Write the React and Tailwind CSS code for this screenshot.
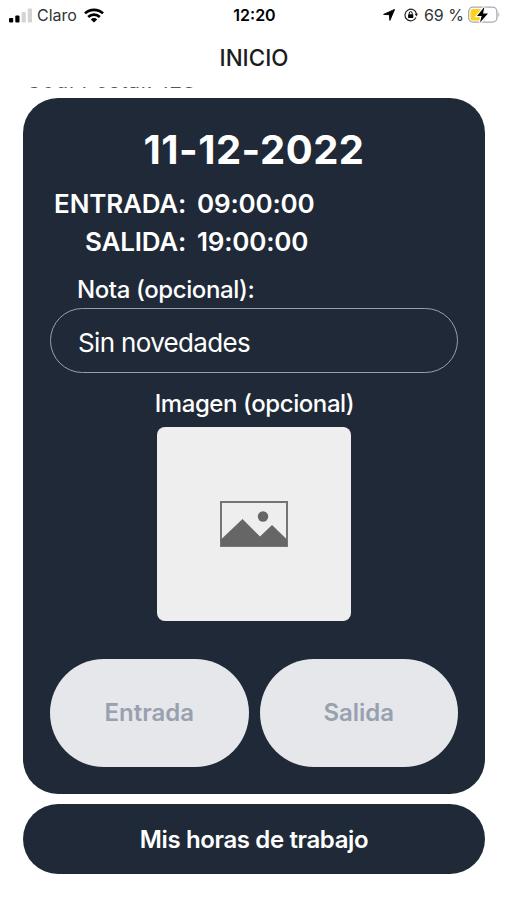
import React from 'react';

const SignalIcon = () => (
  <svg width="23" height="15" viewBox="0 0 23 15">
    <rect x="0" y="10" width="4.2" height="4.5" rx="1" fill="#000" />
    <rect x="6.3" y="7.5" width="4.2" height="7" rx="1" fill="#000" />
    <rect x="12.6" y="4" width="4.2" height="10.5" rx="1" fill="#d4d4d4" />
    <rect x="18.8" y="0.5" width="4.2" height="14" rx="1" fill="#d4d4d4" />
  </svg>
)

const WifiIcon = () => (
  <svg width="20" height="15" viewBox="0 0 20 15" fill="none" stroke="#000" strokeWidth="2.7">
    <path d="M1 5.4a13 13 0 0 1 18 0" />
    <path d="M4.2 9a8.4 8.4 0 0 1 11.6 0" />
    <path d="M10 14.6L6.8 11.4a4.6 4.6 0 0 1 6.4 0z" fill="#000" stroke="none" />
  </svg>
)

const LocationIcon = () => (
  <svg width="12" height="12" viewBox="0 0 12 12">
    <path d="M11.6 0.4L6.9 11.4L6.4 5.7L0.6 5.4z" fill="#000" stroke="#000" strokeWidth="0.9" strokeLinejoin="round" />
  </svg>
)

const RotationLockIcon = () => (
  <svg width="14" height="14" viewBox="0 0 14 14" fill="none">
    <path d="M12 9.6A5.8 5.8 0 1 1 12.5 6" stroke="#222" strokeWidth="1.2" />
    <path d="M10.6 5.8h3.4l-1.6 2.8z" fill="#222" />
    <rect x="4.1" y="6.3" width="5.2" height="3.8" rx="0.6" fill="#000" />
    <path d="M5.2 6.5V5.2a1.5 1.5 0 0 1 3 0v1.3" stroke="#000" />
  </svg>
)

const BatteryIcon = () => (
  <svg width="32" height="18" viewBox="0 0 32 18">
    <rect x="0.7" y="1.2" width="28.2" height="15" rx="4.4" fill="#fff" stroke="#aaa" strokeWidth="1.3" />
    <path d="M5 3h12v11.5H5a2.5 2.5 0 0 1-2.5-2.5V5.5A2.5 2.5 0 0 1 5 3z" fill="#fdd21c" />
    <path d="M30.3 6.3q2 2.4 0 4.8z" fill="#aaa" />
    <path d="M16.5 0.8L9 10h4.6L12 16.6L20 7.5h-5z" fill="#000" stroke="#fff" strokeWidth="2.4" paintOrder="stroke" />
  </svg>
)

const PlaceholderIcon = () => (
  <svg width="68" height="46" viewBox="0 0 68 46">
    <rect x="1" y="1" width="66" height="44" fill="none" stroke="#757575" strokeWidth="2" />
    <path d="M1 38.5L22.5 18L40 35.5L52 24L67 38.5V45H1z" fill="#666" />
    <circle cx="43" cy="15.5" r="5.2" fill="#666" />
  </svg>
)

const App = () => {

  const [note, setNote] = React.useState('Sin novedades')

  return (
    <div className="h-[900px] w-[507px] overflow-hidden bg-white font-['Inter',sans-serif] text-black">
      {/* Status bar */}
      <div className="grid h-[30px] grid-cols-3 items-center pl-[9px] pr-[7px] text-[16px]">
        <div className="flex items-center">
          <SignalIcon />
          <span className="ml-[5px] mr-[7px] text-[#333]">Claro</span>
          <WifiIcon />
        </div>
        <div className="text-center font-semibold">12:20</div>
        <div className="flex items-center justify-end">
          <LocationIcon />
          <span className="ml-[9px] mr-[6px]"><RotationLockIcon /></span>
          <span className="mr-[4px] whitespace-nowrap text-[#333]">69 %</span>
          <BatteryIcon />
        </div>
      </div>

      {/* Header */}
      <div className="flex h-[57px] items-center justify-center">
        <h1 className="-mt-px pl-px text-[22.4px] font-medium text-[#1c1c1e]">INICIO</h1>
      </div>

      {/* Contenido con scroll */}
      <div className="pl-[23px] pr-[22px]">
        <div className="flex h-[11px] items-start overflow-hidden pl-[3px]">
          <p className="-mt-[19.5px] whitespace-nowrap text-[21px] leading-[26px] tracking-[0.72px] text-[#555]">Codi Postal: 123</p>
        </div>

        <div className="flex h-[695.5px] flex-col rounded-[35px] bg-[#1f2937] px-[27px] text-white">
          <h2 className="mt-[27px] text-center text-[40px] font-bold leading-[50px] tracking-[0.5px] [font-feature-settings:'calt'_0]">11-12-2022</h2>

          <div className="mt-[10px] grid grid-cols-[136px_1fr] gap-x-[11px] text-[26px] font-semibold leading-[38px] tracking-[-0.2px]">
            <span className="text-right">ENTRADA:</span>
            <span>09:00:00</span>
            <span className="text-right">SALIDA:</span>
            <span>19:00:00</span>
          </div>

          <label className="ml-[27px] mt-[14px] text-[24px] font-medium leading-[30px] tracking-[-0.4px]">Nota (opcional):</label>
          <input
            type="text"
            value={note}
            onChange={(e) => setNote(e.target.value)}
            className="mt-[3px] h-[65px] w-full rounded-full border border-[#9aa0aa] bg-transparent px-[27px] pt-[3px] text-[26px] tracking-[-0.66px] outline-none"
          />

          <p className="mt-[16px] pl-px text-center text-[24px] font-medium leading-[30px] tracking-[-0.42px]">Imagen (opcional)</p>
          <div className="mx-auto mt-[8px] flex h-[194px] w-[194px] items-center justify-center rounded-[8px] bg-[#eee]">
            <PlaceholderIcon />
          </div>

          <div className="mt-[38px] grid grid-cols-2 gap-[11px]">
            <button className="h-[108px] rounded-full bg-gray-200 text-[24px] font-semibold text-gray-400">Entrada</button>
            <button className="h-[108px] rounded-full bg-gray-200 text-[24px] font-semibold text-gray-400">Salida</button>
          </div>
        </div>

        <button className="mt-[10.5px] h-[70px] w-full rounded-full bg-[#1f2937] pt-[2px] text-[24px] font-semibold tracking-[-0.38px] text-white">
          Mis horas de trabajo
        </button>
      </div>
    </div>
  );
};

export default App;
